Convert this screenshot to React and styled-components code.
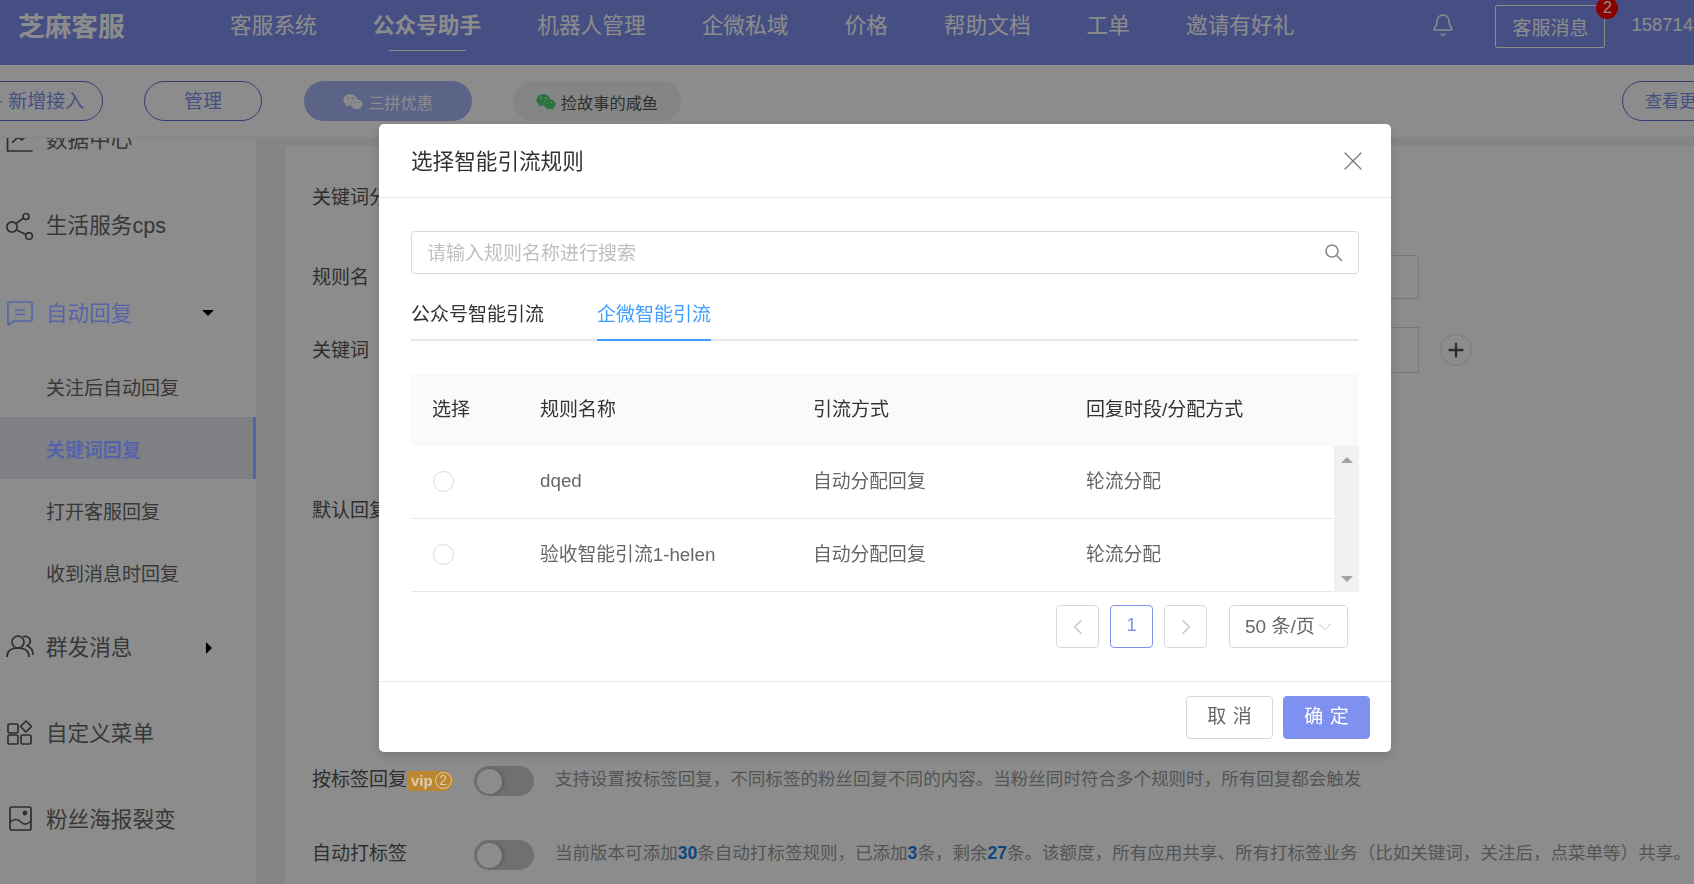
import React from 'react'
import styled, { createGlobalStyle } from 'styled-components'
import { FaWeixin } from 'react-icons/fa'
import { Plus, ChevronLeft, ChevronRight, ChevronDown, X, Bell } from 'lucide-react'

const primary = '#7f91f0'
const activeBlue = '#5564aa'

const GlobalStyle = createGlobalStyle`
  html, body { margin: 0; padding: 0; height: 100%; overflow: hidden; background: #fff; }
  * { box-sizing: border-box; }
  body {
    font-family: "Liberation Sans", "Noto Sans CJK SC", sans-serif;
    color: #333;
  }
`

const Page = styled.div`
  width: 1694px;
  height: 884px;
  overflow: hidden;
  display: flex;
  flex-direction: column;
`

/* top navigation */
const Header = styled.header`
  flex: none;
  height: 65px;
  background: ${primary};
  color: #fff;
  display: flex;
  align-items: flex-start;
  padding-left: 18px;
  overflow: hidden;
`
const Logo = styled.div`
  width: 212px;
  font-size: 26.7px;
  font-weight: 700;
  line-height: 54px;
  white-space: nowrap;
`
const Nav = styled.nav`
  display: flex;
  gap: 56px;
`
const NavItem = styled.a`
  position: relative;
  font-size: 21.7px;
  line-height: 52px;
  font-weight: ${p => (p.$active ? 700 : 400)};
  white-space: nowrap;
  ${p => p.$active && `
    &::after {
      content: "";
      position: absolute;
      left: 16px;
      right: 15px;
      top: 50px;
      height: 1px;
      background: #fff;
    }
  `}
`
const BellBox = styled.div`
  margin: 13px 0 0 137px;
  width: 24px;
  height: 24px;
  display: flex;
  justify-content: center;
`
const MsgButton = styled.div`
  position: relative;
  flex: none;
  margin: 5px 0 0 40px;
  width: 110px;
  height: 43px;
  border: 1px solid #fff;
  border-radius: 2px;
  font-size: 19px;
  line-height: 45px;
  text-align: center;
  white-space: nowrap;
`
const MsgBadge = styled.span`
  position: absolute;
  top: -9px;
  right: -14px;
  width: 22px;
  height: 22px;
  border-radius: 50%;
  background: #f00;
  color: #fff;
  font-size: 16px;
  line-height: 22px;
`
const UserName = styled.div`
  flex: none;
  margin-left: 26px;
  font-size: 18.5px;
  line-height: 50px;
  white-space: nowrap;
`

/* account tabs */
const TabBar = styled.div`
  flex: none;
  height: 73px;
  display: flex;
  align-items: flex-start;
  padding-top: 16px;
  overflow: hidden;
  background: #fff;
  border-bottom: 1px solid #f0f0f0;
`
const PillButton = styled.div`
  flex: none;
  width: ${p => p.$w}px;
  height: 40px;
  margin-left: ${p => p.$ml || 0}px;
  padding-left: ${p => p.$pl || 0}px;
  border: 1px solid #5f70cf;
  border-radius: 20px;
  color: ${primary};
  font-size: ${p => p.$size || 19}px;
  line-height: 39px;
  text-align: ${p => (p.$pl ? 'left' : 'center')};
  white-space: nowrap;
`
const AccountPill = styled.div`
  flex: none;
  width: 168px;
  height: 40px;
  margin-left: ${p => p.$ml}px;
  border-radius: 20px;
  background: ${p => (p.$active ? '#a7b4f5' : '#f2f2f2')};
  color: ${p => (p.$active ? '#fff' : '#555')};
  display: flex;
  align-items: center;
  justify-content: center;
  gap: 5px;
  font-size: 16.2px;
  padding-top: 2px;
  white-space: nowrap;
  svg { font-size: 20px; color: ${p => (p.$active ? '#fff' : '#4bd06f')}; }
`

/* body */
const Body = styled.div`
  flex: 1;
  display: flex;
  min-height: 0;
  background: #f0f2f5;
`
const Sidebar = styled.aside`
  flex: none;
  width: 256px;
  background: #fff;
  overflow: hidden;
`
const SideList = styled.div`
  margin-top: -41px;
`
const SideRow = styled.div`
  position: relative;
  height: 86px;
  display: flex;
  align-items: center;
  padding-left: 6px;
  gap: 12px;
  font-size: 21.6px;
  color: #666;
  svg.side-icon { flex: none; width: 28px; height: 28px; color: #555; }
  ${p => p.$active && `
    svg.side-icon { color: ${activeBlue}; position: relative; z-index: 20; }
  `}
`
const SideText = styled.span`
  padding-bottom: ${p => p.$lift || 2}px;
  ${p => p.$active && `
    color: ${activeBlue};
    position: relative;
    z-index: 20;
  `}
`
const Caret = styled.span`
  position: absolute;
  width: 0;
  height: 0;
  ${p => p.$open
    ? 'right: 42px; top: 41px; border-left: 6px solid transparent; border-right: 6px solid transparent; border-top: 6px solid #000;'
    : 'right: 44px; top: 39px; border-top: 6px solid transparent; border-bottom: 6px solid transparent; border-left: 6px solid #000;'}
`
const SubRow = styled.div`
  position: relative;
  height: 62px;
  display: flex;
  align-items: center;
  padding-left: 46px;
  font-size: 19px;
  background: ${p => (p.$active ? '#e8e9f0' : 'transparent')};
  color: #666;
  ${p => p.$active && `
    &::after {
      content: "";
      position: absolute;
      top: 0;
      bottom: 0;
      right: 0;
      width: 3px;
      background: ${activeBlue};
      z-index: 20;
    }
  `}
`
const SubText = styled.span`
  ${p => p.$active && `
    color: ${activeBlue};
    font-weight: 700;
    position: relative;
    z-index: 20;
  `}
`
const Content = styled.main`
  flex: 1;
  margin: 8px 0 0 29px;
  background: #fff;
  padding: 29px 0 0 27px;
  min-width: 0;
`
const FormRow = styled.div`
  height: 44px;
  margin-top: ${p => p.$top || 0}px;
  display: flex;
  align-items: center;
`
const FormLabel = styled.div`
  flex: none;
  width: 162px;
  padding-bottom: ${p => p.$lift || 4}px;
  font-size: 19px;
  color: #555;
  white-space: nowrap;
`
const Field = styled.div`
  flex: none;
  width: 945px;
  height: ${p => p.$h || 44}px;
  border: 1px solid #d9d9d9;
  border-radius: ${p => (p.$square ? 0 : 4)}px;
`
const AddCircle = styled.div`
  flex: none;
  width: 32px;
  height: 32px;
  margin-left: 21px;
  border: 1px solid #e0e0e0;
  border-radius: 50%;
  color: #555;
  display: flex;
  align-items: center;
  justify-content: center;
`
const RightNote = styled.div`
  flex: none;
  width: 1095px;
  padding: 0 0 4px 897px;
  font-size: 17.5px;
  color: #999;
  white-space: nowrap;
`
const VipTag = styled.span`
  position: relative;
  z-index: 20;
  display: inline-flex;
  align-items: center;
  width: 46px;
  height: 20px;
  padding-left: 4px;
  border-radius: 2px 10px 10px 2px;
  background: #bd8732;
  color: #d9cdb4;
  font-size: 15px;
  font-weight: 700;
  gap: 2px;
  b {
    width: 17px;
    height: 17px;
    border: 1px solid #d9cdb4;
    border-radius: 50%;
    font-size: 14px;
    line-height: 15px;
    text-align: center;
    font-weight: 400;
  }
`
const Toggle = styled.div`
  flex: none;
  width: 60px;
  height: 30px;
  border-radius: 15px;
  background: #ccc;
  padding: 2.5px;
  &::before {
    content: "";
    display: block;
    width: 25px;
    height: 25px;
    border-radius: 50%;
    background: #fff;
    box-shadow: 2px 0 4px rgba(0, 0, 0, .2);
  }
`
const Hint = styled.div`
  margin-left: 21px;
  padding-bottom: 7px;
  font-size: 17.55px;
  color: #999;
  white-space: nowrap;
  b { color: #1f7fe0; }
`

/* modal */
const Mask = styled.div`
  position: fixed;
  inset: 0;
  z-index: 10;
  background: rgba(0, 0, 0, .45);
`
const Modal = styled.div`
  position: fixed;
  z-index: 11;
  left: 379px;
  top: 124px;
  width: 1012px;
  height: 628px;
  background: #fff;
  border-radius: 5px;
  box-shadow: 0 4px 12px rgba(0, 0, 0, .15);
  display: flex;
  flex-direction: column;
`
const ModalHead = styled.div`
  flex: none;
  height: 74px;
  display: flex;
  align-items: center;
  justify-content: space-between;
  padding: 0 22px 0 32px;
  border-bottom: 1px solid #e8e8e8;
  color: #777;
`
const ModalTitle = styled.div`
  font-size: 21.6px;
  color: #333;
  padding-bottom: 3px;
`
const ModalBody = styled.div`
  flex: 1;
  padding: 33px 32px 0;
`
const SearchBox = styled.div`
  height: 43px;
  border: 1px solid #d9d9d9;
  border-radius: 4px;
  display: flex;
  align-items: center;
  justify-content: space-between;
  padding: 0 15px 3px 15px;
  font-size: 19px;
  color: #bfbfbf;
  svg { margin-top: 3px; }
`
const Tabs = styled.div`
  height: 67px;
  display: flex;
  gap: 53px;
  border-bottom: 2px solid #e4e7ed;
`
const Tab = styled.div`
  height: 67px;
  padding-top: 28px;
  font-size: 19px;
  line-height: 26px;
  color: ${p => (p.$active ? '#409eff' : '#333')};
  border-bottom: ${p => (p.$active ? '2px solid #409eff' : 'none')};
`
const TableHead = styled.div`
  margin-top: 33px;
  height: 72px;
  background: #fafafa;
  display: grid;
  grid-template-columns: 107px 273px 273px 1fr;
  align-items: center;
  font-size: 19px;
  color: #333;
`
const Cell = styled.div`
  padding: 0 0 ${p => p.$lift ?? 6}px 21px;
  white-space: nowrap;
`
const NameCell = styled(Cell)`
  padding-left: 22px;
`
const TableBody = styled.div`
  display: flex;
  height: 146px;
`
const Rows = styled.div`
  flex: 1;
`
const Row = styled.div`
  height: 73px;
  display: grid;
  grid-template-columns: 107px 273px 273px 1fr;
  align-items: center;
  border-bottom: 1px solid #e8e8e8;
  font-size: 18.8px;
  color: #666;
`
const Radio = styled.span`
  display: block;
  margin-left: 1px;
  width: 21px;
  height: 21px;
  border-radius: 50%;
  border: 1px solid #d9d9d9;
`
const ScrollTrack = styled.div`
  flex: none;
  width: 25px;
  background: #f1f1f1;
  display: flex;
  flex-direction: column;
  justify-content: space-between;
  align-items: center;
  padding: 11px 0 10px;
`
const ScrollArrow = styled.span`
  width: 0;
  height: 0;
  border-left: 6px solid transparent;
  border-right: 6px solid transparent;
  ${p => (p.$up ? 'border-bottom: 6px solid #a3a3a3;' : 'border-top: 6px solid #a3a3a3;')}
`
const Pager = styled.div`
  display: flex;
  justify-content: flex-end;
  gap: 11px;
  padding: 13px 11px 0 0;
`
const PageBtn = styled.div`
  width: 43px;
  height: 43px;
  border: 1px solid ${p => (p.$active ? primary : '#d9d9d9')};
  border-radius: 4px;
  color: ${p => (p.$active ? primary : '#bfbfbf')};
  display: flex;
  align-items: center;
  justify-content: center;
  font-size: 18px;
  padding-bottom: ${p => (p.$active ? 3 : 0)}px;
`
const PageSize = styled.div`
  width: 119px;
  height: 43px;
  margin-left: 11px;
  border: 1px solid #d9d9d9;
  border-radius: 4px;
  color: #666;
  font-size: 19px;
  display: flex;
  align-items: center;
  padding: 0 0 4px 15px;
  white-space: nowrap;
  svg { color: #bfbfbf; flex: none; margin: 4px 0 0 -1px; }
`
const ModalFoot = styled.div`
  flex: none;
  height: 71px;
  border-top: 1px solid #e8e8e8;
  display: flex;
  justify-content: flex-end;
  gap: 10px;
  padding: 14px 21px 0 0;
`
const FootButton = styled.div`
  width: 87px;
  height: 43px;
  border-radius: 4px;
  border: 1px solid ${p => (p.$primary ? primary : '#d9d9d9')};
  background: ${p => (p.$primary ? primary : '#fff')};
  color: ${p => (p.$primary ? '#fff' : '#666')};
  font-size: 19px;
  line-height: 39px;
  text-align: center;
  word-spacing: 1px;
`

const SideIcon = ({ children }) => (
  <svg className="side-icon" viewBox="0 0 28 28" fill="none" stroke="currentColor" strokeWidth="1.7" strokeLinejoin="round">
    {children}
  </svg>
)
const ChartIcon = () => (
  <SideIcon><path d="M1.500 4v21h25M6 17l6-6 4 3 8-8" /></SideIcon>
)
const ShareIcon = () => (
  <SideIcon>
    <circle cx="6" cy="15" r="5.200" />
    <circle cx="20" cy="4.500" r="3" />
    <circle cx="23" cy="24" r="3.400" />
    <path d="M10 11.500l7.500-5.500M10.500 18l9.500 4.500" />
  </SideIcon>
)
const ChatIcon = () => (
  <SideIcon><path d="M3 4h22a1 1 0 0 1 1 1v17a1 1 0 0 1-1 1H8l-6 4V5a1 1 0 0 1 1-1zM9 12h10M9 16.500h10" /></SideIcon>
)
const UsersIcon = () => (
  <SideIcon>
    <circle cx="12" cy="10" r="6" />
    <path d="M1 25c0-6 4-9 11-9s11 3 11 9M17 4.500c5-1 8 2 7 6-.4 2-2 3-3 3.500 4 1 6 4 6 9" />
  </SideIcon>
)
const MenuIcon = () => (
  <SideIcon>
    <rect x="2" y="6" width="10" height="9" rx="1.500" />
    <rect x="2" y="17" width="10" height="9" rx="1.500" />
    <rect x="15" y="17" width="10" height="9" rx="1.500" />
    <path d="M20 3l5.500 5.500-5.500 5.500-5.500-5.500z" />
  </SideIcon>
)
const PosterIcon = () => (
  <SideIcon>
    <rect x="4" y="3" width="21" height="23" rx="2" />
    <path d="M4 18c5-4 8-3 11 0s6 3 10-1" />
    <circle cx="19" cy="9" r="1.600" fill="currentColor" />
  </SideIcon>
)
const SearchGlyph = () => (
  <svg width="19" height="19" viewBox="0 0 19 19" fill="none" stroke="#888" strokeWidth="1.6">
    <circle cx="8" cy="8" r="6" />
    <path d="M12.500 12.500l5.500 5.500" />
  </svg>
)

const NavLabels = ['客服系统', '公众号助手', '机器人管理', '企微私域', '价格', '帮助文档', '工单', '邀请有好礼']
const SubLabels = ['关注后自动回复', '关键词回复', '打开客服回复', '收到消息时回复']
const ruleRows = [
  { name: 'dqed', lift: 2, way: '自动分配回复', mode: '轮流分配' },
  { name: '验收智能引流1-helen', lift: 6, way: '自动分配回复', mode: '轮流分配' },
]

export default function App() {
  return (
    <Page>
      <GlobalStyle />
      <Header>
        <Logo>芝麻客服</Logo>
        <Nav>
          {NavLabels.map((label, i) => <NavItem key={label} $active={i === 1}>{label}</NavItem>)}
        </Nav>
        <BellBox><Bell size={24} strokeWidth={1.5} /></BellBox>
        <MsgButton>客服消息<MsgBadge>2</MsgBadge></MsgButton>
        <UserName>158714</UserName>
      </Header>

      <TabBar>
        <PillButton $w={130} $ml={-27}>+ 新增接入</PillButton>
        <PillButton $w={118} $ml={41}>管理</PillButton>
        <AccountPill $active $ml={42}><FaWeixin />三拼优惠</AccountPill>
        <AccountPill $ml={41}><FaWeixin />捡故事的咸鱼</AccountPill>
        <PillButton $w={117} $ml={941} $pl={22} $size={17}>查看更多</PillButton>
      </TabBar>

      <Body>
        <Sidebar>
          <SideList>
            <SideRow><ChartIcon /><SideText $lift={6}>数据中心</SideText></SideRow>
            <SideRow><ShareIcon /><SideText $lift={6}>生活服务cps</SideText></SideRow>
            <SideRow $active><ChatIcon /><SideText $active>自动回复</SideText><Caret $open /></SideRow>
            {SubLabels.map((label, i) => (
              <SubRow key={label} $active={i === 1}><SubText $active={i === 1}>{label}</SubText></SubRow>
            ))}
            <SideRow><UsersIcon /><SideText>群发消息</SideText><Caret /></SideRow>
            <SideRow><MenuIcon /><SideText>自定义菜单</SideText></SideRow>
            <SideRow><PosterIcon /><SideText>粉丝海报裂变</SideText></SideRow>
          </SideList>
        </Sidebar>

        <Content>
          <FormRow><FormLabel>关键词分类</FormLabel></FormRow>
          <FormRow $top={36}><FormLabel>规则名</FormLabel><Field /></FormRow>
          <FormRow $top={29}>
            <FormLabel>关键词</FormLabel>
            <Field $h={46} $square />
            <AddCircle><Plus size={22} strokeWidth={2.6} /></AddCircle>
          </FormRow>
          <FormRow $top={116}><FormLabel>默认回复</FormLabel></FormRow>
          <FormRow $top={105}><RightNote>引流规则始终会被触发。</RightNote></FormRow>
          <FormRow $top={78}>
            <FormLabel $lift={7}>按标签回复<VipTag>vip<b>2</b></VipTag></FormLabel>
            <Toggle />
            <Hint>支持设置按标签回复，不同标签的粉丝回复不同的内容。当粉丝同时符合多个规则时，所有回复都会触发</Hint>
          </FormRow>
          <FormRow $top={30}>
            <FormLabel $lift={7}>自动打标签</FormLabel>
            <Toggle />
            <Hint>当前版本可添加<b>30</b>条自动打标签规则，已添加<b>3</b>条，剩余<b>27</b>条。该额度，所有应用共享、所有打标签业务（比如关键词，关注后，点菜单等）共享。</Hint>
          </FormRow>
        </Content>
      </Body>

      <Mask />
      <Modal>
        <ModalHead>
          <ModalTitle>选择智能引流规则</ModalTitle>
          <X size={32} strokeWidth={0.9} />
        </ModalHead>
        <ModalBody>
          <SearchBox>请输入规则名称进行搜索<SearchGlyph /></SearchBox>
          <Tabs>
            <Tab>公众号智能引流</Tab>
            <Tab $active>企微智能引流</Tab>
          </Tabs>
          <TableHead>
            <Cell>选择</Cell><NameCell>规则名称</NameCell><NameCell>引流方式</NameCell><NameCell>回复时段/分配方式</NameCell>
          </TableHead>
          <TableBody>
            <Rows>
              {ruleRows.map(rule => (
                <Row key={rule.name}>
                  <Cell $lift={2}><Radio /></Cell>
                  <NameCell $lift={rule.lift}>{rule.name}</NameCell>
                  <NameCell>{rule.way}</NameCell>
                  <NameCell>{rule.mode}</NameCell>
                </Row>
              ))}
            </Rows>
            <ScrollTrack><ScrollArrow $up /><ScrollArrow /></ScrollTrack>
          </TableBody>
          <Pager>
            <PageBtn><ChevronLeft size={26} strokeWidth={1} /></PageBtn>
            <PageBtn $active>1</PageBtn>
            <PageBtn><ChevronRight size={26} strokeWidth={1} /></PageBtn>
            <PageSize>50 条/页<ChevronDown size={22} strokeWidth={1} /></PageSize>
          </Pager>
        </ModalBody>
        <ModalFoot>
          <FootButton>取 消</FootButton>
          <FootButton $primary>确 定</FootButton>
        </ModalFoot>
      </Modal>
    </Page>
  )
}
